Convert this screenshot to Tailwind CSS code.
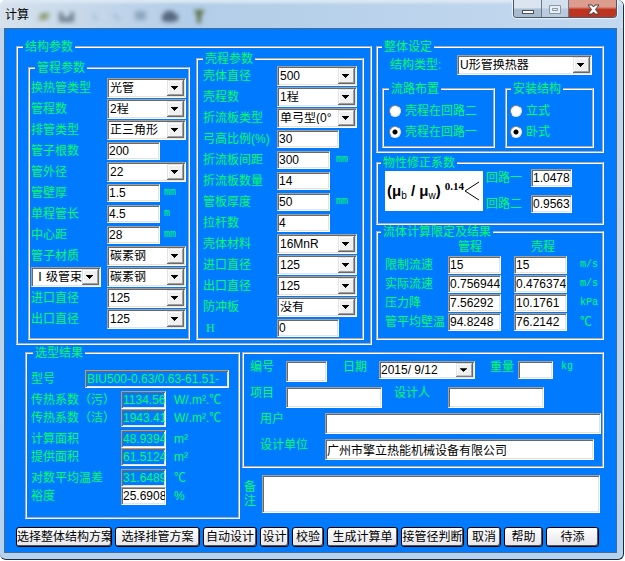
<!DOCTYPE html>
<html lang="zh-CN">
  <head>
    <meta charset="UTF-8" />
    <meta name="viewport" content="width=device-width, initial-scale=1.0" />
    <title>计算</title>
    <script src="https://cdn.jsdelivr.net/npm/@tailwindcss/browser@4"></script>
  </head>
  <body class="bg-white font-['Liberation_Sans','Noto_Sans_CJK_SC',sans-serif] text-xs leading-3">
    <!-- Drop-down arrow shared by all combo boxes -->
    <svg class="hidden">
      <symbol id="arrow" viewBox="0 0 17 16">
        <rect width="17" height="16" fill="#696969" />
        <rect width="16" height="15" fill="#e3e3e3" />
        <rect x="1" y="1" width="15" height="14" fill="#a0a0a0" />
        <rect x="1" y="1" width="14" height="13" fill="#fff" />
        <rect x="2" y="2" width="13" height="12" fill="#f0f0f0" />
        <path d="M4 6h7v1h-1v1h-1v1h-1v1h-1v-1h-1v-1h-1v-1h-1z" fill="#000" />
      </symbol>
    </svg>

    <div class="mr-px rounded-t-md rounded-b-md border-r border-b border-[#1d2b3a] bg-linear-to-b from-[#c3d6ea] to-[#b4d3f0] pr-1.5 pb-1.5">
      <!-- Title bar -->
      <header class="-mr-1.5 flex h-7 items-start justify-between rounded-t-md bg-linear-to-r from-[#d6e1ec] via-[#b3cde8] via-30% to-[#c3d9ef] pr-1.5 pl-1 shadow-[inset_0_3px_3px_#dce8f4]">
        <div class="flex items-center gap-2 pt-1.5">
          <h1 class="pl-px leading-4 text-black">计算</h1>
          <svg class="h-[18px] w-44 blur-[2px]" viewBox="0 0 176 18" aria-hidden="true">
            <path d="M1 14l3-7h9l-3 7z" fill="#8f9f78" />
            <path d="M22 6h4v5h7v-5h4v10h-15z" fill="#71808f" />
            <path d="M56 8l4 6M76 8l7 6" stroke="#9db4ce" stroke-width="2" />
            <path d="M98 5h11v9h-11z" fill="#8fa6c0" />
            <path d="M125 8h16v7h-16zM128 5h9v11h-9z" fill="#56677e" />
            <path d="M157 4h11l-4 6v7h-4v-7z" fill="#5f7048" />
          </svg>
        </div>
        <div class="flex h-[18px] overflow-hidden rounded-b border border-t-0 border-[#4b5868] shadow-[0_0_1px_1px_#e9f2fb]">
          <button type="button" aria-label="最小化" class="grid w-7 place-items-center border-r border-[#6b7a8b] bg-linear-to-b from-[#dbe5ef] from-45% to-[#a9bbce] to-55%">
            <svg class="h-4 w-4" viewBox="0 0 16 16"><rect x="2.500" y="9.500" width="11" height="3" fill="#fff" stroke="#4a5058" /></svg>
          </button>
          <button type="button" aria-label="最大化" disabled class="grid w-[27px] place-items-center border-r border-[#6b7a8b] bg-linear-to-b from-[#d3e0ed] from-45% to-[#b9cbdd] to-55%">
            <svg class="h-4 w-4" viewBox="0 0 16 16" fill="#e8eef5" stroke="#8996a5"><path d="M2.500 4.500h11v8h-11z" /><path d="M5.500 7.500h5v2h-5z" /></svg>
          </button>
          <button type="button" aria-label="关闭" class="grid w-[47px] place-items-center bg-linear-to-b from-[#dc9c8e] from-40% to-[#bd3421] to-55%">
            <svg class="h-4 w-4" viewBox="0 0 16 16"><path d="M3 4h4l1.500 2l1.500-2h4l-3.500 4.500l3.500 4.500h-4l-1.500-2l-1.500 2h-4l3.500-4.500z" fill="#fff" stroke="#4d4148" /></svg>
          </button>
        </div>
      </header>

      <main
        class="ml-1 border border-[#4d6a88] bg-[#007bff] pt-3 pr-3 pb-[5px] pl-[11px] text-[#00ff66] [&_fieldset]:min-w-0 [&_fieldset]:border-2 [&_fieldset]:border-white [&_fieldset]:[border-style:groove] [&_input[type=text]]:h-[18px] [&_input[type=text]]:min-w-0 [&_input[type=text]]:border [&_input[type=text]]:border-t-[#a0a0a0] [&_input[type=text]]:border-r-white [&_input[type=text]]:border-b-white [&_input[type=text]]:border-l-[#a0a0a0] [&_input[type=text]]:pl-px [&_input[type=text]]:shadow-[inset_1px_1px_#696969,inset_-1px_-1px_#e3e3e3] [&_input[type=text]:enabled]:bg-white [&_input[type=text]:enabled]:text-black [&_label]:whitespace-nowrap [&_legend]:px-0.5 [&_legend]:leading-3 [&_select]:col-start-1 [&_select]:row-start-1 [&_select]:h-5 [&_select]:w-full [&_select]:min-w-0 [&_select]:appearance-none [&_select]:border [&_select]:border-t-[#a0a0a0] [&_select]:border-r-white [&_select]:border-b-white [&_select]:border-l-[#a0a0a0] [&_select]:bg-white [&_select]:pr-4 [&_select]:pl-0.5 [&_select]:text-black [&_select]:shadow-[inset_1px_1px_#696969,inset_-1px_-1px_#e3e3e3]"
      >
        <div class="flex items-start gap-1">
          <!-- Structure parameters -->
          <fieldset class="flex w-[356px] shrink-0 gap-1.5 pr-1.5 pb-[3px] pl-2.5">
            <legend class="ml-[-5px]">结构参数</legend>

            <fieldset class="mt-[9px] w-[162px] pt-[3px] pl-px">
              <legend class="ml-1">管程参数</legend>
              <div class="grid auto-rows-[21px] grid-cols-[76px_53px_26px] items-center">
                <label for="tubeType">换热管类型</label>
                <div class="col-span-2 grid items-center">
                  <select id="tubeType"><option>光管</option></select>
                  <svg class="pointer-events-none col-start-1 row-start-1 mr-0.5 h-4 w-[17px] justify-self-end"><use href="#arrow" /></svg>
                </div>
                <label for="tubePass">管程数</label>
                <div class="col-span-2 grid items-center">
                  <select id="tubePass"><option>2程</option></select>
                  <svg class="pointer-events-none col-start-1 row-start-1 mr-0.5 h-4 w-[17px] justify-self-end"><use href="#arrow" /></svg>
                </div>
                <label for="tubeLayout">排管类型</label>
                <div class="col-span-2 grid items-center">
                  <select id="tubeLayout"><option>正三角形</option></select>
                  <svg class="pointer-events-none col-start-1 row-start-1 mr-0.5 h-4 w-[17px] justify-self-end"><use href="#arrow" /></svg>
                </div>
                <label for="tubeCount">管子根数</label>
                <input type="text" id="tubeCount" value="200" />
                <span></span>
                <label for="tubeOd">管外径</label>
                <div class="col-span-2 grid items-center">
                  <select id="tubeOd"><option>22</option></select>
                  <svg class="pointer-events-none col-start-1 row-start-1 mr-0.5 h-4 w-[17px] justify-self-end"><use href="#arrow" /></svg>
                </div>
                <label for="tubeWall">管壁厚</label>
                <input type="text" id="tubeWall" value="1.5" />
                <span class="pl-1 font-['Liberation_Mono',monospace] text-[10px]">mm</span>
                <label for="tubeLength">单程管长</label>
                <input type="text" id="tubeLength" value="4.5" />
                <span class="pl-1 font-['Liberation_Mono',monospace] text-[10px]">m</span>
                <label for="pitch">中心距</label>
                <input type="text" id="pitch" value="28" />
                <span class="pl-1 font-['Liberation_Mono',monospace] text-[10px]">mm</span>
                <label for="tubeMaterial">管子材质</label>
                <div class="col-span-2 grid items-center">
                  <select id="tubeMaterial"><option>碳素钢</option></select>
                  <svg class="pointer-events-none col-start-1 row-start-1 mr-0.5 h-4 w-[17px] justify-self-end"><use href="#arrow" /></svg>
                </div>
                <div class="mr-1.5 grid items-center">
                  <select id="bundleGrade" aria-label="管束等级"><option>Ⅰ级管束</option></select>
                  <svg class="pointer-events-none col-start-1 row-start-1 mr-0.5 h-4 w-[17px] justify-self-end"><use href="#arrow" /></svg>
                </div>
                <div class="col-span-2 grid items-center">
                  <select id="bundleMaterial" aria-label="管束材质"><option>碳素钢</option></select>
                  <svg class="pointer-events-none col-start-1 row-start-1 mr-0.5 h-4 w-[17px] justify-self-end"><use href="#arrow" /></svg>
                </div>
                <label for="tubeInlet">进口直径</label>
                <div class="col-span-2 grid items-center">
                  <select id="tubeInlet"><option>125</option></select>
                  <svg class="pointer-events-none col-start-1 row-start-1 mr-0.5 h-4 w-[17px] justify-self-end"><use href="#arrow" /></svg>
                </div>
                <label for="tubeOutlet">出口直径</label>
                <div class="col-span-2 grid items-center">
                  <select id="tubeOutlet"><option>125</option></select>
                  <svg class="pointer-events-none col-start-1 row-start-1 mr-0.5 h-4 w-[17px] justify-self-end"><use href="#arrow" /></svg>
                </div>
              </div>
            </fieldset>

            <fieldset class="w-[168px] pl-[5px]">
              <legend>壳程参数</legend>
              <div class="grid auto-rows-[21px] grid-cols-[74px_53px_9px_18px] items-center">
                <label for="shellDiameter">壳体直径</label>
                <div class="col-span-3 grid items-center">
                  <select id="shellDiameter"><option>500</option></select>
                  <svg class="pointer-events-none col-start-1 row-start-1 mr-0.5 h-4 w-[17px] justify-self-end"><use href="#arrow" /></svg>
                </div>
                <label for="shellPass">壳程数</label>
                <div class="col-span-3 grid items-center">
                  <select id="shellPass"><option>1程</option></select>
                  <svg class="pointer-events-none col-start-1 row-start-1 mr-0.5 h-4 w-[17px] justify-self-end"><use href="#arrow" /></svg>
                </div>
                <label for="baffleType">折流板类型</label>
                <div class="col-span-3 grid items-center">
                  <select id="baffleType"><option>单弓型(0°</option></select>
                  <svg class="pointer-events-none col-start-1 row-start-1 mr-0.5 h-4 w-[17px] justify-self-end"><use href="#arrow" /></svg>
                </div>
                <label for="baffleCut">弓高比例(%)</label>
                <input type="text" id="baffleCut" value="30" class="col-span-2" />
                <span></span>
                <label for="baffleSpacing">折流板间距</label>
                <input type="text" id="baffleSpacing" value="300" />
                <span class="col-span-2 pl-1.5 font-['Liberation_Mono',monospace] text-[10px]">mm</span>
                <label for="baffleCount">折流板数量</label>
                <input type="text" id="baffleCount" value="14" />
                <span class="col-span-2"></span>
                <label for="tubesheet">管板厚度</label>
                <input type="text" id="tubesheet" value="50" />
                <span class="col-span-2 pl-1.5 font-['Liberation_Mono',monospace] text-[10px]">mm</span>
                <label for="tieRods">拉杆数</label>
                <input type="text" id="tieRods" value="4" />
                <span class="col-span-2"></span>
                <label for="shellMaterial">壳体材料</label>
                <div class="col-span-3 grid items-center">
                  <select id="shellMaterial"><option>16MnR</option></select>
                  <svg class="pointer-events-none col-start-1 row-start-1 mr-0.5 h-4 w-[17px] justify-self-end"><use href="#arrow" /></svg>
                </div>
                <label for="shellInlet">进口直径</label>
                <div class="col-span-3 grid items-center">
                  <select id="shellInlet"><option>125</option></select>
                  <svg class="pointer-events-none col-start-1 row-start-1 mr-0.5 h-4 w-[17px] justify-self-end"><use href="#arrow" /></svg>
                </div>
                <label for="shellOutlet">出口直径</label>
                <div class="col-span-3 grid items-center">
                  <select id="shellOutlet"><option>125</option></select>
                  <svg class="pointer-events-none col-start-1 row-start-1 mr-0.5 h-4 w-[17px] justify-self-end"><use href="#arrow" /></svg>
                </div>
                <label for="impingement">防冲板</label>
                <div class="col-span-3 grid items-center">
                  <select id="impingement"><option>没有</option></select>
                  <svg class="pointer-events-none col-start-1 row-start-1 mr-0.5 h-4 w-[17px] justify-self-end"><use href="#arrow" /></svg>
                </div>
                <label for="plateH" class="pl-[3px] font-['Liberation_Serif',serif]">H</label>
                <input type="text" id="plateH" value="0" class="col-span-2" />
              </div>
            </fieldset>
          </fieldset>

          <div class="flex min-w-0 flex-1 flex-col">
            <!-- Overall settings -->
            <fieldset class="pt-0.5 pb-[3px] pl-1">
              <legend>整体设定</legend>
              <div class="flex items-center pr-2.5 pl-2">
                <label for="structure" class="w-[67px] shrink-0">结构类型:</label>
                <div class="grid flex-1 items-center">
                  <select id="structure"><option>U形管换热器</option></select>
                  <svg class="pointer-events-none col-start-1 row-start-1 mr-0.5 h-4 w-[17px] justify-self-end"><use href="#arrow" /></svg>
                </div>
              </div>
              <div class="mt-2 flex gap-2.5 pr-2">
                <fieldset class="w-[113px] pt-[5px] pb-1 pl-[5px]">
                  <legend>流路布置</legend>
                  <label class="flex h-[21px] items-center gap-1">
                    <input type="radio" name="flow" class="size-3 appearance-none rounded-full border border-[#808080] border-r-[#e3e3e3] border-b-[#e3e3e3] bg-white checked:bg-[radial-gradient(circle,#000_2px,#fff_3px)]" />
                    壳程在回路二
                  </label>
                  <label class="flex h-[21px] items-center gap-1">
                    <input type="radio" name="flow" checked class="size-3 appearance-none rounded-full border border-[#808080] border-r-[#e3e3e3] border-b-[#e3e3e3] bg-white checked:bg-[radial-gradient(circle,#000_2px,#fff_3px)]" />
                    壳程在回路一
                  </label>
                </fieldset>
                <fieldset class="flex-1 pt-[5px] pb-1 pl-[3px]">
                  <legend class="ml-px">安装结构</legend>
                  <label class="flex h-[21px] items-center gap-1">
                    <input type="radio" name="install" class="size-3 appearance-none rounded-full border border-[#808080] border-r-[#e3e3e3] border-b-[#e3e3e3] bg-white checked:bg-[radial-gradient(circle,#000_2px,#fff_3px)]" />
                    立式
                  </label>
                  <label class="flex h-[21px] items-center gap-1">
                    <input type="radio" name="install" checked class="size-3 appearance-none rounded-full border border-[#808080] border-r-[#e3e3e3] border-b-[#e3e3e3] bg-white checked:bg-[radial-gradient(circle,#000_2px,#fff_3px)]" />
                    卧式
                  </label>
                </fieldset>
              </div>
            </fieldset>

            <!-- Property correction factor -->
            <fieldset class="mt-1 pb-2.5 pl-[7px]">
              <legend class="-ml-1">物性修正系数</legend>
              <div class="flex items-center">
                <div class="flex h-10 w-[98px] shrink-0 items-center bg-white pl-0.5 text-[15px] font-bold text-black">
                  <span class="whitespace-nowrap">(μ<sub class="text-[10px] font-normal">b</sub> / μ<sub class="text-[10px] font-normal">w</sub>)</span>
                  <sup class="pl-1 font-['Liberation_Serif',serif] text-[11px]">0.14</sup>
                  <svg class="h-5 w-4 shrink-0" viewBox="0 0 16 20"><path d="M15 1L1 10L15 19" fill="none" stroke="#000" /></svg>
                </div>
                <div class="grid grid-cols-[45px_41px] items-center gap-y-2 pl-[3px]">
                  <label for="loop1">回路一</label>
                  <input type="text" id="loop1" value="1.0478" />
                  <label for="loop2">回路二</label>
                  <input type="text" id="loop2" value="0.9563" />
                </div>
              </div>
            </fieldset>

            <!-- Fluid limits and results -->
            <fieldset class="mt-px pb-[7px] pl-[7px]">
              <legend class="-ml-1">流体计算限定及结果</legend>
              <div class="grid auto-rows-[17px] grid-cols-[63px_66px_66px_auto] items-center">
                <span></span>
                <span class="pl-2.5">管程</span>
                <span class="pl-[17px]">壳程</span>
                <span></span>
              </div>
              <div class="grid auto-rows-[19px] grid-cols-[63px_66px_66px_auto] items-center">
                <label for="limitTube">限制流速</label>
                <input type="text" id="limitTube" value="15" class="w-[53px]" />
                <input type="text" aria-label="壳程限制流速" value="15" class="w-[53px]" />
                <span class="font-['Liberation_Mono',monospace] text-[10px]">m/s</span>
                <label for="actualTube">实际流速</label>
                <input type="text" id="actualTube" value="0.756944" class="w-[53px]" />
                <input type="text" aria-label="壳程实际流速" value="0.476374" class="w-[53px]" />
                <span class="font-['Liberation_Mono',monospace] text-[10px]">m/s</span>
                <label for="dropTube">压力降</label>
                <input type="text" id="dropTube" value="7.56292" class="w-[53px]" />
                <input type="text" aria-label="壳程压力降" value="10.1761" class="w-[53px]" />
                <span class="font-['Liberation_Mono',monospace] text-[10px]">kPa</span>
                <label for="wallTube">管平均壁温</label>
                <input type="text" id="wallTube" value="94.8248" class="w-[53px]" />
                <input type="text" aria-label="壳程管平均壁温" value="76.2142" class="w-[53px]" />
                <span>℃</span>
              </div>
            </fieldset>
          </div>
        </div>

        <div class="mt-0.5 flex items-start gap-0.5 pl-[9px]">
          <!-- Selection result -->
          <fieldset class="w-[215px] shrink-0 pt-[11px] pr-[9px] pb-3 pl-1">
            <legend class="ml-0.5">选型结果</legend>
            <div class="flex items-center">
              <label for="model" class="w-[54px] shrink-0">型号</label>
              <input type="text" id="model" value="BIU500-0.63/0.63-61.51-" disabled class="flex-1" />
            </div>
            <div class="mt-[3px] grid grid-cols-[90px_45px_auto] items-center">
              <label for="kDirty">传热系数（污）</label>
              <input type="text" id="kDirty" value="1134.56" disabled />
              <span class="pl-2">W/.m².℃</span>
              <label for="kClean">传热系数（洁）</label>
              <input type="text" id="kClean" value="1943.41" disabled />
              <span class="pl-2">W/.m².℃</span>
            </div>
            <div class="mt-[3px] grid grid-cols-[90px_45px_auto] items-center">
              <label for="areaCalc">计算面积</label>
              <input type="text" id="areaCalc" value="48.9394" disabled />
              <span class="pl-2">m²</span>
              <label for="areaReal">提供面积</label>
              <input type="text" id="areaReal" value="61.5124" disabled />
              <span class="pl-2">m²</span>
            </div>
            <div class="mt-[3px] grid grid-cols-[90px_45px_auto] items-center">
              <label for="lmtd">对数平均温差</label>
              <input type="text" id="lmtd" value="31.6489" disabled />
              <span class="pl-2">℃</span>
              <label for="margin">裕度</label>
              <input type="text" id="margin" value="25.6908" />
              <span class="pl-2">%</span>
            </div>
          </fieldset>

          <div class="min-w-0 flex-1 pt-[5px]">
            <!-- Project info -->
            <fieldset class="flex flex-col gap-[5px] pt-[7px] pb-1.5 pl-1.5">
              <div class="flex items-start">
                <label for="serial" class="w-9">编号</label>
                <input type="text" id="serial" class="h-[21px]! w-[41px]" />
                <label for="date" class="ml-4 w-9">日期</label>
                <div class="grid w-24 items-center">
                  <input type="text" id="date" value="2015/ 9/12" class="col-start-1 row-start-1 w-full" />
                  <button type="button" aria-label="选择日期" class="col-start-1 row-start-1 mr-0.5 justify-self-end">
                    <svg class="h-3.5 w-[17px]" viewBox="0 0 17 16" preserveAspectRatio="none"><use href="#arrow" /></svg>
                  </button>
                </div>
                <label for="weight" class="ml-[15px] w-7">重量</label>
                <input type="text" id="weight" class="w-[35px]" />
                <span class="pl-2 font-['Liberation_Mono',monospace] text-[10px]">kg</span>
              </div>
              <div class="flex items-start">
                <label for="project" class="w-9">项目</label>
                <input type="text" id="project" class="h-[21px]! w-24" />
                <label for="designer" class="ml-3 w-[54px]">设计人</label>
                <input type="text" id="designer" class="h-[21px]! w-24" />
              </div>
              <div class="flex items-start pr-px pl-2.5">
                <label for="client" class="w-[65px] shrink-0">用户</label>
                <input type="text" id="client" class="h-[21px]! flex-1" />
              </div>
              <div class="flex items-start pr-2 pl-2.5">
                <label for="company" class="w-[65px] shrink-0">设计单位</label>
                <input type="text" id="company" value="广州市擎立热能机械设备有限公司" class="h-[21px]! flex-1" />
              </div>
            </fieldset>

            <div class="mt-[7px] flex items-center pr-1 pl-0.5">
              <label for="remark" class="w-[18px] shrink-0 leading-[14px]"><span class="block">备</span><span class="block">注</span></label>
              <textarea id="remark" class="h-[38px] flex-1 resize-none border border-t-[#a0a0a0] border-r-white border-b-white border-l-[#a0a0a0] bg-white text-black shadow-[inset_1px_1px_#696969,inset_-1px_-1px_#e3e3e3]"></textarea>
            </div>
          </div>
        </div>

        <!-- Actions -->
        <div class="mt-2 flex gap-[3px] text-black [&_button]:h-5 [&_button]:shrink-0 [&_button]:overflow-hidden [&_button]:rounded-[3px] [&_button]:border [&_button]:border-black [&_button]:bg-linear-to-b [&_button]:from-white [&_button]:to-[#e4e4ea] [&_button]:whitespace-nowrap [&_button]:shadow-[inset_-1px_-1px_#555]">
          <button type="button" class="w-24">选择整体结构方案</button>
          <button type="button" class="w-[85px]">选择排管方案</button>
          <button type="button" class="w-[54px]">自动设计</button>
          <button type="button" class="w-[29px]">设计</button>
          <button type="button" class="w-8">校验</button>
          <button type="button" class="w-[71px]">生成计算单</button>
          <button type="button" class="w-[63px]">接管径判断</button>
          <button type="button" class="w-[34px]">取消</button>
          <button type="button" class="w-[39px]">帮助</button>
          <button type="button" class="w-[53px]">待添</button>
        </div>
      </main>
    </div>
  </body>
</html>
